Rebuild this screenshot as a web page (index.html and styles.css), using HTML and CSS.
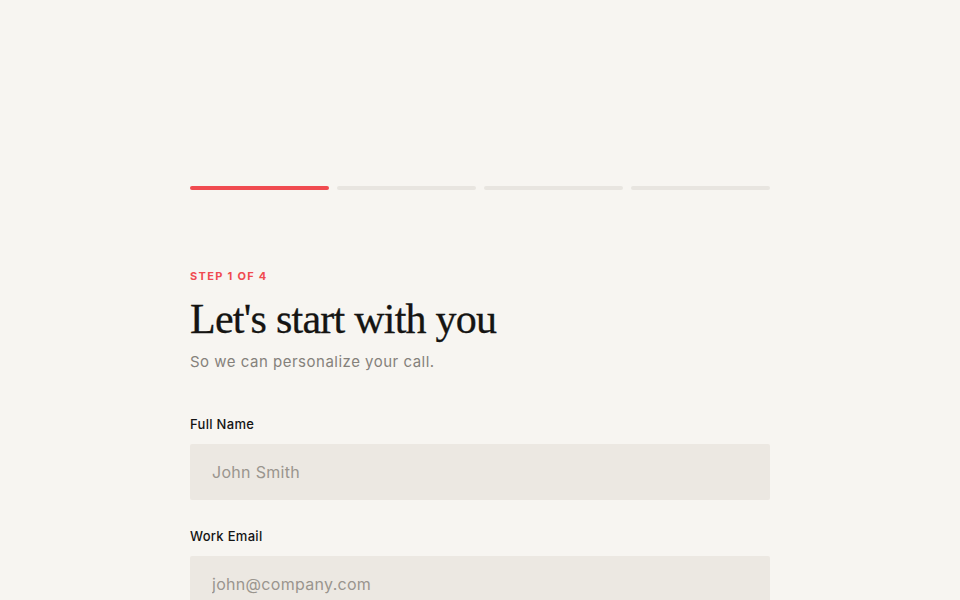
FILE: index.html
```html
<!DOCTYPE html>
<html lang="en">
<head>
<meta charset="utf-8">
<title>Let's start with you</title>
<link rel="stylesheet" href="styles.css">
</head>
<body>
<main class="wrap">
  <div class="progress">
    <span class="seg seg-active"></span>
    <span class="seg"></span>
    <span class="seg"></span>
    <span class="seg"></span>
  </div>
  <p class="step">STEP 1 OF 4</p>
  <h1 class="title">Let's start with you</h1>
  <p class="sub">So we can personalize your call.</p>
  <form class="form">
    <label class="field">
      <span class="label">Full Name</span>
      <input class="input" type="text" placeholder="John Smith">
    </label>
    <label class="field">
      <span class="label">Work Email</span>
      <input class="input" type="email" placeholder="john@company.com">
    </label>
  </form>
</main>
</body>
</html>
```
FILE: styles.css
```css
html, body {
  margin: 0;
  padding: 0;
  background: #f7f5f1;
}
body {
  font-family: "Inter", "Liberation Sans", sans-serif;
  color: #141414;
}
.wrap {
  width: 580px;
  margin: 0 auto;
  padding-top: 186px;
}
.progress {
  display: grid;
  grid-template-columns: repeat(4, 1fr);
  gap: 8px;
}
.seg {
  display: block;
  height: 4px;
  border-radius: 2px;
  background: #e8e5e0;
}
.seg-active {
  background: #f04b50;
}
.step {
  margin: 79px 0 0;
  font-size: 11px;
  line-height: 14px;
  font-weight: 700;
  letter-spacing: 1.3px;
  color: #f04b50;
}
.title {
  margin: 12px 0 0;
  font-family: "Liberation Serif", "DejaVu Serif", serif;
  font-weight: 400;
  font-size: 42px;
  line-height: 48px;
  letter-spacing: -0.75px;
  color: #151412;
  -webkit-text-stroke: 0.3px #151412;
}
.sub {
  margin: 9px 0 0;
  font-size: 15px;
  line-height: 20px;
  letter-spacing: 0.5px;
  color: #85817b;
}
.form {
  margin-top: 44px;
  display: flex;
  flex-direction: column;
  gap: 28px;
}
.field {
  display: flex;
  flex-direction: column;
  gap: 12px;
}
.label {
  font-size: 13px;
  line-height: 16px;
  font-weight: 500;
  letter-spacing: 0.3px;
  color: #141414;
}
.input {
  box-sizing: border-box;
  width: 100%;
  height: 56px;
  border: 0;
  border-radius: 2px;
  padding: 0 22px;
  background: #ece8e2;
  font-family: "Inter", "Liberation Sans", sans-serif;
  font-size: 16px;
  letter-spacing: 0.3px;
  color: #141414;
  outline: none;
}
.input::placeholder {
  color: #9a958e;
}
```
